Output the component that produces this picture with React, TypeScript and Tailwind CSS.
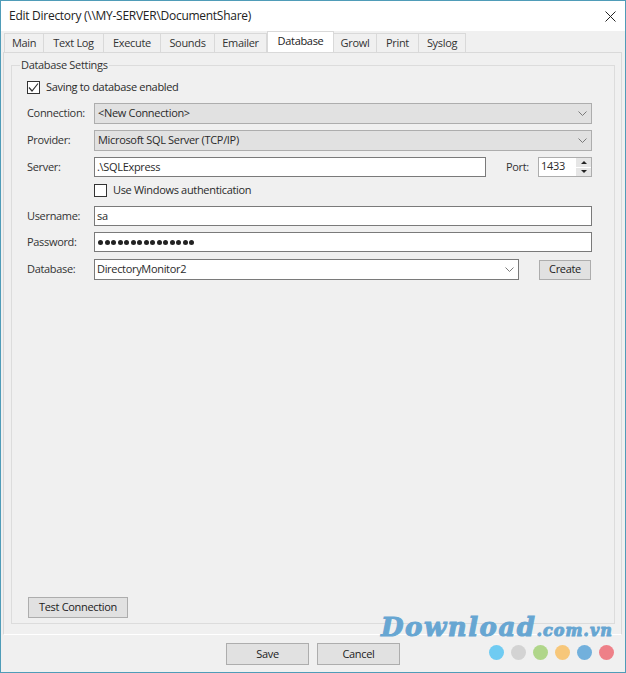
import React from 'react';

const tabs = [
  { label: 'Main', w: 'w-[40px]' },
  { label: 'Text Log', w: 'w-[60px]' },
  { label: 'Execute', w: 'w-[57px]' },
  { label: 'Sounds', w: 'w-[54px]' },
  { label: 'Emailer', w: 'w-[52px]' },
  { label: 'Database', w: 'w-[67px]', active: true },
  { label: 'Growl', w: 'w-[43px]' },
  { label: 'Print', w: 'w-[42px]' },
  { label: 'Syslog', w: 'w-[47px]' },
];

const Chevron = () => (
  <svg width="9" height="5" viewBox="0 0 9 5" className="shrink-0" fill="none" stroke="#7a7a7a" strokeWidth="1">
    <path d="M0.5 0.5 L4.5 4.5 L8.5 0.5" />
  </svg>
);

const Check = ({ checked }: { checked?: boolean }) => (
  <div className="w-[13px] h-[13px] border border-[#333] bg-white flex items-center justify-center shrink-0">
    {checked && (
      <svg width="11" height="11" viewBox="0 0 11 11" fill="none" stroke="#333" strokeWidth="1.2">
        <path d="M1 5.5 L4 9 L10 1.5" />
      </svg>
    )}
  </div>
);

const Label = ({ children }: { children: React.ReactNode }) => (
  <span className="w-[67px] shrink-0 text-[#333]">{children}</span>
);

const ComboGrey = ({ text }: { text: string }) => (
  <div className="w-[498px] h-[21px] bg-[#e1e1e1] border border-[#adadad] flex items-center justify-between pl-[3px] pr-[4px]">
    <span>{text}</span>
    <Chevron />
  </div>
);

const Btn = ({ text, cls }: { text: string; cls: string }) => (
  <div className={`bg-[#e1e1e1] border border-[#adadad] flex items-center justify-center text-[#222] ${cls}`}>{text}</div>
);

export default function App() {
  return (
    <div
      className="relative w-[626px] h-[673px] bg-[#f0f0f0] border border-[#4f9cb8] flex flex-col text-[11px] tracking-[-0.32px] text-[#2a2a2a] overflow-hidden"
      style={{ fontFamily: '"Open Sans", "Noto Sans", sans-serif' }}
    >
      {/* title bar */}
      <div className="h-[30px] bg-white flex items-center justify-between pl-[8px] pr-[9px] shrink-0">
        <span className="text-[12px] tracking-[-0.27px] text-[#222]">Edit Directory (\\MY-SERVER\DocumentShare)</span>
        <svg width="11" height="11" viewBox="0 0 11 11" fill="none" stroke="#222" strokeWidth="1">
          <path d="M0.5 0.5 L10.5 10.5 M10.5 0.5 L0.5 10.5" />
        </svg>
      </div>

      {/* tabs */}
      <div className="h-[21px] flex items-end pl-[3px] shrink-0 relative z-10">
        {tabs.map(t =>
          t.active ? (
            <div key={t.label} className={`${t.w} h-[21px] bg-white border-x border-t border-[#d9d9d9] flex items-center justify-center pb-[2px] text-[#222]`}>
              {t.label}
            </div>
          ) : (
            <div key={t.label} className={`${t.w} h-[19px] bg-[#f0f0f0] border-t border-r border-[#d9d9d9] first:border-l flex items-center justify-center text-[#333]`}>
              {t.label}
            </div>
          )
        )}
      </div>

      {/* tab panel */}
      <div className="ml-[2px] mr-[3px] h-[583px] border border-[#d9d9d9] bg-[#f0f0f0] pl-[7px] pr-[6px] pt-[12px] pb-[10px] shrink-0 border-b-white">
        <div className="relative h-full border border-[#dcdcdc] pl-[15px] flex flex-col">
          <span className="absolute -top-[9px] left-[8px] bg-[#f0f0f0] px-[1px] text-[#333] leading-[16px]">Database Settings</span>

          <div className="flex items-center h-[13px] mt-[15px] gap-[6px]">
            <Check checked />
            <span>Saving to database enabled</span>
          </div>

          <div className="flex items-center mt-[9px]">
            <Label>Connection:</Label>
            <ComboGrey text="<New Connection>" />
          </div>

          <div className="flex items-center mt-[6px]">
            <Label>Provider:</Label>
            <ComboGrey text="Microsoft SQL Server (TCP/IP)" />
          </div>

          <div className="flex items-center mt-[6px]">
            <Label>Server:</Label>
            <div className="w-[392px] h-[20px] bg-white border border-[#7a7a7a] flex items-center pl-[2px]">.\SQLExpress</div>
            <span className="ml-[20px] w-[32px] text-[#333]">Port:</span>
            <div className="w-[54px] h-[20px] bg-white border border-[#adadad] flex justify-between pl-[2px]">
              <span className="leading-[15px]">1433</span>
              <div className="w-[15px] flex flex-col gap-[1px] bg-white">
                <div className="flex-1 bg-[#e6e6e6] flex items-center justify-center">
                  <div className="w-0 h-0 border-x-[3px] border-x-transparent border-b-[3px] border-b-[#222]" />
                </div>
                <div className="flex-1 bg-[#e6e6e6] flex items-center justify-center">
                  <div className="w-0 h-0 border-x-[3px] border-x-transparent border-t-[3px] border-t-[#222]" />
                </div>
              </div>
            </div>
          </div>

          <div className="flex items-center h-[13px] mt-[7px] ml-[67px] gap-[6px]">
            <Check />
            <span>Use Windows authentication</span>
          </div>

          <div className="flex items-center mt-[9px]">
            <Label>Username:</Label>
            <div className="w-[498px] h-[20px] bg-white border border-[#7a7a7a] flex items-center pl-[2px]">sa</div>
          </div>

          <div className="flex items-center mt-[6px]">
            <Label>Password:</Label>
            <div className="w-[498px] h-[20px] bg-white border border-[#7a7a7a] flex items-center pl-[3px] gap-[1.5px]">
              {Array.from({ length: 15 }).map((_, i) => (
                <div key={i} className="w-[5px] h-[5px] rounded-full bg-[#222]" />
              ))}
            </div>
          </div>

          <div className="flex items-center mt-[7px]">
            <Label>Database:</Label>
            <div className="w-[425px] h-[21px] bg-white border border-[#7a7a7a] flex items-center justify-between pl-[2px] pr-[4px]">
              <span>DirectoryMonitor2</span>
              <Chevron />
            </div>
            <Btn text="Create" cls="ml-[20px] w-[52px] h-[20px]" />
          </div>

          <div className="mt-auto mb-[5px] ml-[1px]">
            <Btn text="Test Connection" cls="w-[100px] h-[21px]" />
          </div>
        </div>
      </div>

      {/* footer */}
      <div className="flex-1 flex items-start pt-[8px] pl-[225px] gap-[8px]">
        <Btn text="Save" cls="w-[83px] h-[22px]" />
        <Btn text="Cancel" cls="w-[83px] h-[22px]" />
      </div>

      {/* watermark */}
      <div
        className="absolute left-[380px] top-[613px] flex items-baseline text-[#67a6d2] italic font-bold leading-none"
        style={{ fontFamily: '"DejaVu Serif", serif', WebkitTextStroke: '1px #67a6d2' }}
      >
        <span className="text-[26px] tracking-[1.5px]">Download</span>
        <span className="text-[16px] tracking-[1px]">.com.vn</span>
      </div>
      <div className="absolute left-[488px] top-[644px] flex gap-[7px]">
        <div className="w-[15px] h-[15px] rounded-full bg-[#6fcbf2]" />
        <div className="w-[15px] h-[15px] rounded-full bg-[#d3d3d3]" />
        <div className="w-[15px] h-[15px] rounded-full bg-[#b0d68a]" />
        <div className="w-[15px] h-[15px] rounded-full bg-[#f7c77a]" />
        <div className="w-[15px] h-[15px] rounded-full bg-[#72b0dc]" />
        <div className="w-[15px] h-[15px] rounded-full bg-[#ee8088]" />
      </div>
    </div>
  );
}
